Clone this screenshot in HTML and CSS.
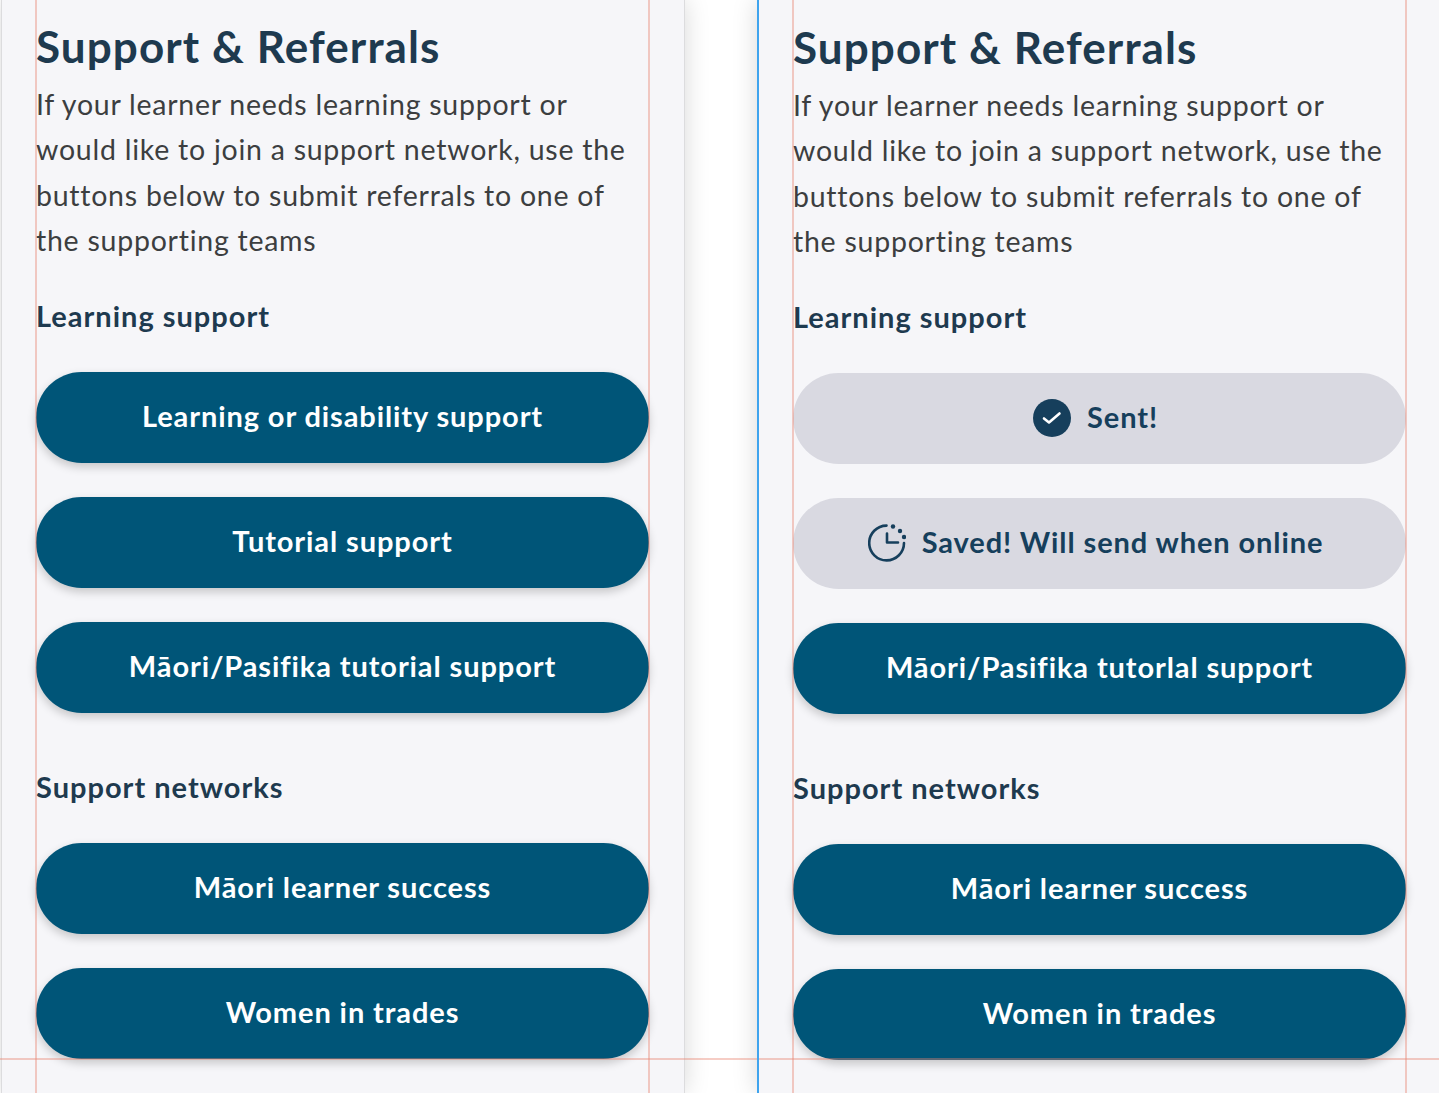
FILE: index.html
```html
<!DOCTYPE html>
<html lang="en">
<head>
    <meta charset="UTF-8">
    <meta name="viewport" content="width=device-width, initial-scale=1.0">
    <title>Support &amp; Referrals</title>
    <link rel="stylesheet" href="styles.css">
</head>
<body>
    <div class="canvas">
        <section class="frame frame_left">
            <h1>Support &amp; Referrals</h1>
            <p class="intro">If your learner needs learning support or would like to join a support network, use the buttons below to submit referrals to one of the supporting teams</p>
            <h2>Learning support</h2>
            <div class="button_list">
                <button class="referral_button">Learning or disability support</button>
                <button class="referral_button">Tutorial support</button>
                <button class="referral_button">Māori/Pasifika tutorial support</button>
            </div>
            <h2 class="networks_title">Support networks</h2>
            <div class="button_list">
                <button class="referral_button">Māori learner success</button>
                <button class="referral_button">Women in trades</button>
            </div>
        </section>

        <section class="frame frame_right">
            <h1>Support &amp; Referrals</h1>
            <p class="intro">If your learner needs learning support or would like to join a support network, use the buttons below to submit referrals to one of the supporting teams</p>
            <h2>Learning support</h2>
            <div class="button_list">
                <button class="referral_button is_done">
                    <svg class="status_icon" viewBox="0 0 38 38" width="38" height="38">
                        <circle cx="19" cy="19" r="19" fill="#163f5c"/>
                        <path d="M11 19.5l5 4 10.5-9" fill="none" stroke="#fff" stroke-width="2.6" stroke-linecap="round" stroke-linejoin="round"/>
                    </svg>
                    Sent!
                </button>
                <button class="referral_button is_done">
                    <svg class="status_icon" viewBox="0 0 38 38" width="38" height="38">
                        <path d="M18.5 1.6A17.4 17.4 0 1 0 36 19" fill="none" stroke="#163f5c" stroke-width="2.6" stroke-linecap="round"/>
                        <path d="M19 9.5v9h11" fill="none" stroke="#163f5c" stroke-width="2.6" stroke-linecap="round" stroke-linejoin="round"/>
                        <circle cx="25" cy="2.5" r="2.2" fill="#163f5c"/>
                        <circle cx="32" cy="7" r="2.2" fill="#163f5c"/>
                        <circle cx="36" cy="13" r="2.2" fill="#163f5c"/>
                    </svg>
                    Saved! Will send when online
                </button>
                <button class="referral_button">Māori/Pasifika tutorlal support</button>
            </div>
            <h2 class="networks_title">Support networks</h2>
            <div class="button_list">
                <button class="referral_button">Māori learner success</button>
                <button class="referral_button">Women in trades</button>
            </div>
        </section>

        <div class="guide guide_v guide_a"></div>
        <div class="guide guide_v guide_b"></div>
        <div class="guide guide_v guide_c"></div>
        <div class="guide guide_v guide_d"></div>
        <div class="guide guide_h"></div>
        <div class="guide guide_blue"></div>
    </div>
</body>
</html>
```

FILE: styles.css
```css
html, body {
    margin: 0;
    padding: 0;
    background-color: #fff;
}
.canvas {
    position: relative;
    display: flex;
    gap: 74px;
    width: 1439px;
    height: 1093px;
    overflow: hidden;
    font-family: "Lato", "Noto Sans", sans-serif;
}
.frame {
    flex: none;
    box-sizing: border-box;
    height: 1093px;
    width: 682px;
    background-color: #f6f6f9;
    box-shadow: 0 0 0 1px #dcdcde, 0 0 24px rgba(0, 0, 0, 0.17);
}
.frame_left {
    margin-left: 2px;
    padding: 20px 35px 0 34px;
}
.frame_right {
    padding: 21px 0 0 35px;
    width: 683px;
}
h1 {
    margin: 0;
    height: 52px;
    font-size: 44px;
    line-height: 52px;
    font-weight: 700;
    letter-spacing: 1.1px;
    color: #1e3a4f;
}
.intro {
    width: 600px;
    margin: 10px 0 0;
    font-size: 28.5px;
    line-height: 45.4px;
    font-weight: 400;
    letter-spacing: 0.75px;
    color: #3c3e40;
}
h2 {
    margin: 32px 0 0;
    font-size: 29px;
    line-height: 40px;
    font-weight: 700;
    letter-spacing: 1px;
    color: #1e3a4f;
}
.networks_title {
    margin-top: 54px;
}
.button_list {
    display: flex;
    flex-direction: column;
    gap: 34px;
    margin-top: 36px;
    width: 613px;
}
.referral_button {
    display: flex;
    justify-content: center;
    align-items: center;
    gap: 16px;
    box-sizing: border-box;
    height: 91px;
    padding: 0 0 4px;
    border: none;
    border-radius: 46px;
    background-color: #005578;
    color: #fff;
    font-family: inherit;
    font-size: 29px;
    font-weight: 700;
    letter-spacing: 0.9px;
    box-shadow: 0 4px 10px rgba(0, 0, 0, 0.2);
}
.is_done {
    padding-right: 8px;
    background-color: #d9d9e1;
    color: #163f5c;
    box-shadow: none;
}
.status_icon {
    flex: none;
    margin-top: 4px;
}
.guide {
    position: absolute;
}
.guide_v {
    top: 0;
    bottom: 0;
    width: 2px;
    background-color: rgba(232, 130, 110, 0.4);
}
.guide_a { left: 35px; }
.guide_b { left: 648px; }
.guide_c { left: 792px; }
.guide_d { left: 1405px; }
.guide_h {
    left: 0;
    right: 0;
    top: 1058px;
    height: 2px;
    background-color: rgba(232, 130, 110, 0.4);
}
.guide_blue {
    top: 0;
    bottom: 0;
    left: 757px;
    width: 2px;
    background-color: #3fa4ee;
}
```
